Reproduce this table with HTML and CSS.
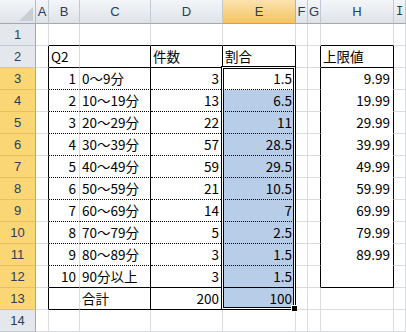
FILE: index.html
```html
<!DOCTYPE html>
<html lang="ja">
<head>
    <meta charset="UTF-8">
    <meta name="viewport" content="width=device-width, initial-scale=1.0">
    <title>Q2 - 件数と割合</title>
    <link rel="stylesheet" href="styles.css">
</head>
<body>
    <div class="sheet">
        <!-- column headers -->
        <div class="corner">
            <svg width="14" height="14" viewBox="0 0 14 14"><polygon points="14,0 14,14 0,14" fill="#c9ced4"/></svg>
        </div>
        <div class="ch">A</div>
        <div class="ch">B</div>
        <div class="ch">C</div>
        <div class="ch">D</div>
        <div class="ch sel">E</div>
        <div class="ch">F</div>
        <div class="ch">G</div>
        <div class="ch">H</div>
        <div class="ch serif">I</div>

        <!-- row 1 -->
        <div class="rh">1</div>
        <div></div>
        <div class="bb"></div>
        <div class="bb"></div>
        <div class="bb"></div>
        <div class="bb"></div>
        <div></div>
        <div></div>
        <div class="bb"></div>
        <div></div>

        <!-- row 2: table headings -->
        <div class="rh">2</div>
        <div class="br"></div>
        <div class="bb">Q2</div>
        <div class="bb br"></div>
        <div class="bb br">件数</div>
        <div class="bb br">割合</div>
        <div></div>
        <div class="br"></div>
        <div class="bb br">上限値</div>
        <div></div>

        <!-- rows 3-11 -->
        <div class="rh sel">3</div>
        <div class="br"></div>
        <div class="num bd">1</div>
        <div class="bd br">0～9分</div>
        <div class="num bd br">3</div>
        <div class="num bd br">1.5</div>
        <div></div>
        <div class="br"></div>
        <div class="num clear br">9.99</div>
        <div></div>

        <div class="rh sel">4</div>
        <div class="br"></div>
        <div class="num bd">2</div>
        <div class="bd br">10～19分</div>
        <div class="num bd br">13</div>
        <div class="num bd br fill">6.5</div>
        <div></div>
        <div class="br"></div>
        <div class="num clear br">19.99</div>
        <div></div>

        <div class="rh sel">5</div>
        <div class="br"></div>
        <div class="num bd">3</div>
        <div class="bd br">20～29分</div>
        <div class="num bd br">22</div>
        <div class="num bd br fill">11</div>
        <div></div>
        <div class="br"></div>
        <div class="num clear br">29.99</div>
        <div></div>

        <div class="rh sel">6</div>
        <div class="br"></div>
        <div class="num bd">4</div>
        <div class="bd br">30～39分</div>
        <div class="num bd br">57</div>
        <div class="num bd br fill">28.5</div>
        <div></div>
        <div class="br"></div>
        <div class="num clear br">39.99</div>
        <div></div>

        <div class="rh sel">7</div>
        <div class="br"></div>
        <div class="num bd">5</div>
        <div class="bd br">40～49分</div>
        <div class="num bd br">59</div>
        <div class="num bd br fill">29.5</div>
        <div></div>
        <div class="br"></div>
        <div class="num clear br">49.99</div>
        <div></div>

        <div class="rh sel">8</div>
        <div class="br"></div>
        <div class="num bd">6</div>
        <div class="bd br">50～59分</div>
        <div class="num bd br">21</div>
        <div class="num bd br fill">10.5</div>
        <div></div>
        <div class="br"></div>
        <div class="num clear br">59.99</div>
        <div></div>

        <div class="rh sel">9</div>
        <div class="br"></div>
        <div class="num bd">7</div>
        <div class="bd br">60～69分</div>
        <div class="num bd br">14</div>
        <div class="num bd br fill">7</div>
        <div></div>
        <div class="br"></div>
        <div class="num clear br">69.99</div>
        <div></div>

        <div class="rh sel">10</div>
        <div class="br"></div>
        <div class="num bd">8</div>
        <div class="bd br">70～79分</div>
        <div class="num bd br">5</div>
        <div class="num bd br fill">2.5</div>
        <div></div>
        <div class="br"></div>
        <div class="num clear br">79.99</div>
        <div></div>

        <div class="rh sel">11</div>
        <div class="br"></div>
        <div class="num bd">9</div>
        <div class="bd br">80～89分</div>
        <div class="num bd br">3</div>
        <div class="num bd br fill">1.5</div>
        <div></div>
        <div class="br"></div>
        <div class="num clear br">89.99</div>
        <div></div>

        <!-- row 12 -->
        <div class="rh sel">12</div>
        <div class="br"></div>
        <div class="num bb">10</div>
        <div class="bb br">90分以上</div>
        <div class="num bb br">3</div>
        <div class="num bb br fill">1.5</div>
        <div></div>
        <div class="br"></div>
        <div class="bb br"></div>
        <div></div>

        <!-- row 13: total -->
        <div class="rh sel">13</div>
        <div class="br"></div>
        <div class="bb"></div>
        <div class="bb br">合計</div>
        <div class="num bb br">200</div>
        <div class="num bb br fill">100</div>
        <div></div>
        <div></div>
        <div></div>
        <div></div>

        <!-- row 14 -->
        <div class="rh">14</div>
        <div></div>
        <div></div>
        <div></div>
        <div></div>
        <div></div>
        <div></div>
        <div></div>
        <div></div>
        <div></div>

        <!-- selection frame over E3:E13 -->
        <span class="selection"></span>
        <span class="fill-handle"></span>
    </div>
</body>
</html>
```

FILE: styles.css
```css
/* General Styles */
body {
    margin: 0;
    background-color: #fff;
}

/* Sheet grid */
.sheet {
    position: relative;
    display: grid;
    grid-template-columns: 36px 13px 31px 71px 72px 73px 12px 13px 73px 12px;
    grid-template-rows: 24px repeat(14, 22px);
    width: 406px;
    height: 332px;
    overflow: hidden;
}

.sheet > div {
    box-sizing: border-box;
    border-right: 1px solid #dadcdd;
    border-bottom: 1px solid #dadcdd;
    padding: 0 2px;
    font-family: "Noto Sans CJK JP", sans-serif;
    font-size: 13.5px;
    line-height: 21px;
    color: #000;
    white-space: nowrap;
    overflow: hidden;
}

/* Cell borders and fills */
.sheet > .bb {
    border-bottom: 1px solid #000;
}

.sheet > .bd {
    border-bottom: 1px dotted #000;
}

.sheet > .br {
    border-right: 1px solid #000;
}

.sheet > .clear {
    border-bottom-color: #fff;
}

.sheet > .num {
    text-align: right;
    padding-right: 3px;
}

.sheet > .fill {
    background-color: #b8cde8;
}

/* Headers */
.sheet > .corner {
    display: flex;
    align-items: flex-end;
    justify-content: flex-end;
    padding: 0 2px 2px 0;
    background: linear-gradient(#f3f5f8, #dfe3e8);
    border-right-color: #b4bcc6;
    border-bottom-color: #9fa8b4;
}

.sheet > .ch {
    text-align: center;
    font-family: "Liberation Sans", sans-serif;
    font-size: 13px;
    line-height: 23px;
    color: #27405c;
    background: linear-gradient(#f3f5f8, #dfe3e8);
    border-right-color: #c3c9d1;
    border-bottom-color: #9fa8b4;
    padding: 0;
}

.sheet > .ch.serif {
    font-family: "DejaVu Sans Mono", monospace;
    font-size: 12px;
}

.sheet > .ch.sel {
    background: linear-gradient(#fbe3ae, #f3c462);
    border-bottom: 1px solid #f29436;
    border-right-color: #d9ab5a;
}

.sheet > .rh {
    text-align: center;
    font-family: "Liberation Sans", sans-serif;
    font-size: 13px;
    color: #27405c;
    background-color: #e4e8ed;
    border-right-color: #9fa8b4;
    border-bottom-color: #c3c9d1;
    padding: 0;
}

.sheet > .rh.sel {
    background-color: #fad675;
    border-right-color: #e69a3c;
    border-bottom-color: #e8bf62;
}

/* Selection frame with its fill handle */
.selection {
    position: absolute;
    left: 221px;
    top: 66px;
    width: 75px;
    height: 244px;
    box-sizing: border-box;
    border: 1px solid #000;
    box-shadow: inset 0 0 0 1px #fff, inset 0 0 0 2px #000;
    pointer-events: none;
}

.fill-handle {
    position: absolute;
    left: 291px;
    top: 305px;
    width: 5px;
    height: 5px;
    background-color: #000;
    border: 1px solid #fff;
}
```
